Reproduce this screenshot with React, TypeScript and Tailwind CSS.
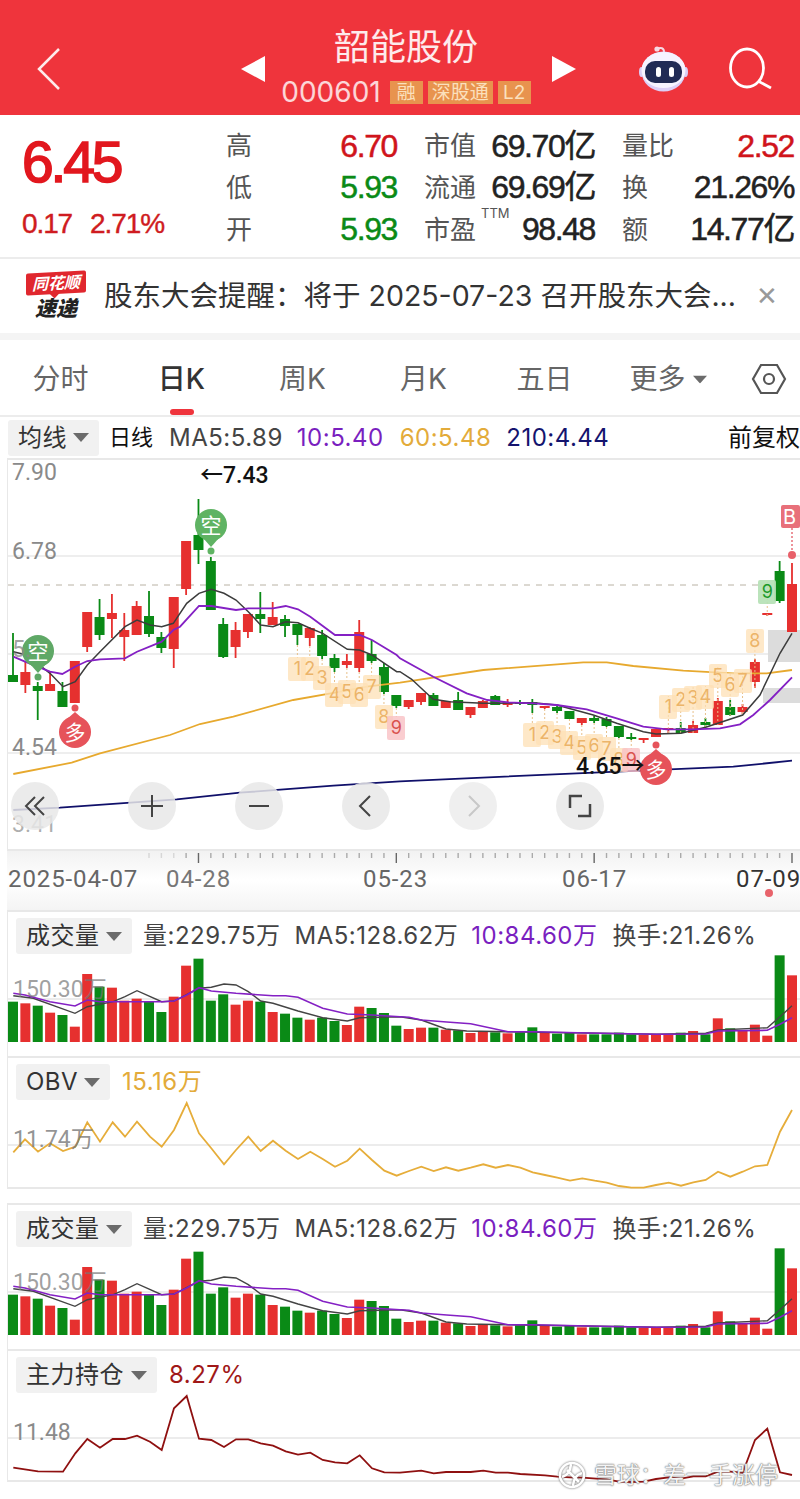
import type { ReactNode } from "react";

const RED = "#e6302f";
const GREEN = "#0a8a16";
const STEP = 12.365;
const cx = (i: number) => 13 + STEP * i;
const axisFont = "font-['Roboto','Noto_Sans_CJK_SC',sans-serif]";

// [index, body top, body bottom, wick top, wick bottom] in page pixels
const up = "r";
const dn = "g";
const candles: [string, number, number, number, number][] = [
  [dn, 675, 682, 633, 682], [up, 672, 685, 662, 693], [dn, 686, 691, 682, 720], [up, 684, 691, 672, 691],
  [dn, 691, 707, 682, 707], [up, 661, 703, 661, 703], [up, 612, 647, 612, 652], [dn, 617, 635, 599, 640],
  [up, 613, 619, 594, 638], [up, 630, 637, 613, 661], [up, 606, 635, 601, 635], [dn, 616, 634, 591, 637],
  [dn, 637, 648, 632, 653], [up, 597, 649, 597, 668], [up, 541, 589, 541, 595], [dn, 535, 550, 499, 564],
  [dn, 561, 610, 557, 610], [dn, 624, 657, 618, 658], [up, 630, 647, 622, 658], [up, 614, 632, 614, 638],
  [dn, 614, 619, 592, 633], [up, 617, 625, 602, 625], [dn, 619, 626, 615, 637], [dn, 624, 635, 624, 645],
  [up, 628, 638, 627, 646], [dn, 635, 656, 630, 659], [dn, 658, 668, 654, 672], [up, 661, 665, 654, 668],
  [up, 632, 668, 620, 672], [dn, 654, 661, 640, 663], [dn, 667, 692, 663, 694], [dn, 695, 706, 695, 708],
  [up, 700, 707, 700, 709], [up, 693, 702, 693, 705], [dn, 695, 706, 693, 706], [up, 701, 708, 701, 708],
  [dn, 700, 710, 692, 710], [up, 707, 715, 707, 718], [up, 701, 708, 700, 708], [dn, 696, 705, 695, 705],
  [up, 702, 705, 699, 707], [dn, 702, 704, 700, 705], [dn, 702, 705, 699, 713], [up, 706, 708, 706, 709],
  [dn, 707, 711, 706, 713], [dn, 711, 719, 711, 719], [up, 718, 723, 718, 725], [dn, 718, 721, 716, 723],
  [dn, 719, 726, 717, 727], [dn, 726, 737, 726, 738], [dn, 737, 739, 733, 740], [up, 738, 739, 738, 743],
  [up, 729, 737, 729, 737], [up, 728, 730, 728, 733], [dn, 728, 733, 722, 733], [up, 725, 733, 721, 733],
  [dn, 722, 725, 718, 727], [up, 701, 725, 698, 725], [dn, 707, 715, 700, 716], [up, 707, 712, 704, 714],
  [up, 662, 682, 659, 688], [up, 613, 615, 613, 616], [dn, 571, 601, 561, 603], [up, 584, 632, 563, 632],
];

// top of each volume bar, zoomed coords of the first panel
const volTops = [
  290, 295, 302, 323, 330, 365, 207, 245, 248, 287, 281, 290, 321, 275, 182, 161, 287, 268, 299, 287, 290, 321, 326,
  338, 344, 338, 348, 360, 305, 309, 324, 362, 372, 368, 368, 374, 376, 384, 380, 382, 385, 382, 367, 384, 386, 384,
  388, 388, 388, 383, 388, 390, 390, 390, 383, 378, 388, 340, 370, 378, 359, 392, 151, 211,
];

const toPath = (pts: number[][]) => pts.map(([x, y], i) => `${i ? "L" : "M"}${x.toFixed(1)} ${y.toFixed(1)}`).join(" ");
// zoom crops were 3x: left half starts at x=0, right half at x=400
const mix = (left: number[][], right: number[][], oy: number) => [
  ...left.map(([x, y]) => [x / 3, oy + y / 3]),
  ...right.map(([x, y]) => [400 + x / 3, oy + y / 3]),
];

const maPurple = toPath([
  ...[[40, 110], [75, 125], [150, 155], [187, 162], [225, 140], [262, 123], [300, 118], [375, 115], [411, 95], [485, 65], [520, 30]].map(([x, y]) => [x / 3, 620 + y / 3]),
  ...[[540, 860], [597, 798], [634, 798], [708, 810], [745, 805], [819, 805], [857, 798], [894, 808], [931, 830]].map(([x, y]) => [x / 3, 340 + y / 3]),
  ...mix([[1005, 45], [1079, 45], [1116, 60], [1190, 105]], [[0, 115], [100, 170], [200, 220], [262, 240], [325, 247], [400, 250], [470, 255], [560, 268], [650, 295], [730, 320], [800, 328], [880, 328], [960, 325], [1020, 313], [1060, 285], [1110, 240], [1176, 172]], 620),
]);
const maBlack = toPath([
  ...[[40, 95], [80, 105], [150, 160], [189, 200], [226, 185], [262, 135], [300, 95]].map(([x, y]) => [x / 3, 620 + y / 3]),
  ...[[375, 860], [411, 840], [450, 855], [485, 860], [520, 850], [560, 790], [597, 760], [634, 748], [672, 760], [708, 780], [745, 815], [782, 855], [819, 860], [857, 845], [894, 848]].map(([x, y]) => [x / 3, 340 + y / 3]),
  ...mix([[930, 25], [968, 40], [1042, 88], [1079, 90], [1116, 105], [1190, 155]], [[0, 155], [35, 178], [75, 215], [100, 238], [150, 245], [250, 250], [287, 250], [400, 248], [470, 255], [580, 285], [650, 310], [730, 335], [768, 342], [843, 340], [917, 322], [1028, 285], [1080, 225], [1140, 100], [1176, 40]], 620),
]);
const maOrange = toPath(mix([[40, 462], [215, 428], [300, 400], [510, 345], [600, 312], [700, 290], [880, 240], [1005, 218], [1100, 200]], [[0, 188], [250, 150], [550, 127], [620, 127], [700, 138], [850, 152], [1000, 160], [1100, 160], [1176, 150]], 620));
const maNavy = toPath(mix([[40, 570], [180, 563], [530, 538], [720, 518], [1000, 497]], [[0, 484], [530, 460], [1000, 440], [1176, 422]], 620));

const volPurple = toPath(mix([[40, 265], [75, 270], [150, 290], [225, 303], [262, 285], [300, 290], [485, 290], [522, 288], [560, 270], [597, 248], [634, 258], [708, 265], [819, 272], [857, 272], [894, 277], [968, 310], [1042, 327], [1116, 330]], [[0, 335], [27, 337], [64, 345], [140, 351], [212, 356], [324, 380], [400, 380], [600, 385], [770, 388], [917, 387], [954, 378], [1102, 376], [1140, 358], [1176, 338]], 905));
const volBlack = toPath(mix([[40, 272], [100, 280], [225, 325], [262, 305], [340, 290], [375, 275], [411, 257], [485, 290], [522, 288], [597, 250], [634, 247], [672, 237], [708, 240], [745, 260], [782, 288], [819, 295], [894, 318], [968, 338], [1042, 348], [1079, 338]], [[0, 335], [64, 345], [138, 372], [200, 378], [324, 380], [600, 385], [770, 388], [917, 385], [954, 375], [1102, 368], [1140, 335], [1176, 302]], 905));
const obvLine = toPath(mix([[40, 742], [75, 703], [114, 740], [150, 715], [189, 738], [226, 725], [262, 652], [300, 710], [338, 652], [375, 695], [411, 650], [450, 695], [485, 725], [522, 675], [560, 594], [597, 685], [634, 730], [672, 778], [708, 735], [745, 695], [782, 738], [819, 707], [857, 737], [894, 762], [931, 740], [968, 762], [1005, 785], [1042, 767], [1079, 731], [1116, 765], [1153, 797], [1190, 812]], [[0, 808], [27, 798], [64, 785], [101, 798], [138, 787], [175, 797], [212, 788], [250, 778], [287, 788], [324, 780], [361, 788], [398, 802], [435, 810], [472, 818], [510, 827], [547, 820], [584, 827], [620, 833], [657, 843], [694, 848], [731, 848], [768, 840], [806, 833], [843, 842], [880, 832], [917, 825], [954, 800], [991, 815], [1028, 800], [1065, 784], [1102, 780], [1140, 680], [1176, 615]], 905));
const holdLine = toPath(mix([[40, 803], [114, 814], [189, 815], [226, 760], [262, 717], [300, 743], [338, 717], [375, 717], [411, 707], [450, 725], [485, 750], [522, 625], [560, 588], [597, 716], [634, 720], [672, 741], [708, 718], [745, 718], [782, 730], [819, 737], [857, 754], [894, 764], [931, 758], [968, 780], [1005, 787], [1042, 790], [1079, 766], [1116, 805], [1153, 817]], [[0, 818], [64, 812], [101, 820], [138, 816], [212, 816], [250, 812], [287, 818], [324, 818], [361, 822], [435, 826], [472, 830], [510, 832], [547, 833], [620, 838], [657, 845], [694, 846], [731, 845], [768, 837], [806, 832], [843, 836], [880, 829], [917, 829], [954, 815], [991, 815], [1028, 818], [1065, 720], [1102, 686], [1140, 817], [1176, 825]], 1200));

// TD sequence counters over the candles: [candle index, centre y, label, tone]
const tdMarks: [number, number, string, string][] = [
  [23, 669, "1", "o"], [24, 669, "2", "o"], [25, 678, "3", "o"], [26, 695, "4", "o"], [27, 692, "5", "o"], [28, 695, "6", "o"], [29, 687, "7", "o"], [30, 717, "8", "o"], [31, 728, "9", "p"],
  [42, 735, "1", "o"], [43, 733, "2", "o"], [44, 737, "3", "o"], [45, 743, "4", "o"], [46, 748, "5", "o"], [47, 746, "6", "o"], [48, 749, "7", "o"], [49, 760, "8", "o"], [50, 760, "9", "p"],
  [53, 707, "1", "o"], [54, 700, "2", "o"], [55, 698, "3", "o"], [56, 697, "4", "o"], [57, 676, "5", "o"], [58, 685, "6", "o"], [59, 681, "7", "o"], [60, 641, "8", "o"], [61, 592, "9", "g"],
];

function Arrow({ className = "" }: { className?: string }) {
  return (
    <svg width="16" height="9" viewBox="0 0 16 9" className={className}>
      <path d="M0 0H16L8 9Z" fill="#6b6b6b" />
    </svg>
  );
}

function Pill({ label, width }: { label: string; width: string }) {
  return (
    <div className={`flex h-[36px] items-center justify-between rounded-[3px] bg-[#f1f1f1] pl-[10px] pr-[10px] text-[24px] text-[#333] ${width}`}>
      <span>{label}</span>
      <Arrow />
    </div>
  );
}

function VolumeBars({ top }: { top: number }) {
  const shift = top - 910;
  return (
    <svg viewBox={`8 ${955 + shift} 792 90`} className="block h-[90px] w-full">
      <line x1="8" x2="800" y1={999 + shift} y2={999 + shift} stroke="#e6e6e6" strokeWidth="1.5" />
      {volTops.map((t, i) => {
        const y = 905 + t / 3 + shift;
        return (
          <rect
            key={i}
            x={cx(i) - 5}
            y={y}
            width="10"
            height={1042 + shift - y}
            fill={candles[i][0] === up ? RED : GREEN}
          />
        );
      })}
      <g transform={`translate(0 ${shift})`} fill="none">
        <path d={volBlack} stroke="#444" strokeWidth="1.4" />
        <path d={volPurple} stroke="#8420c4" strokeWidth="1.6" />
      </g>
    </svg>
  );
}

function VolumePanel({ top }: { top: number }) {
  return (
    <section className="relative ml-[7px] h-[146px] border-t-2 border-l border-[#e8e8e8] bg-white">
      <div className="flex h-[43px] items-center pl-[8px] pt-[5px] text-[24px] tracking-[0.5px] text-[#444]">
        <Pill label="成交量" width="w-[116px]" />
        <span className="ml-[11px]">量:229.75万</span>
        <span className="ml-[14px]">MA5:128.62万</span>
        <span className="ml-[13px] text-[#7a1fbf]">10:84.60万</span>
        <span className="ml-[15px]">换手:21.26%</span>
      </div>
      <VolumeBars top={top} />
      <span className={`absolute left-[5px] top-[61px] text-[23px] text-[#777]/70 ${axisFont}`}>150.30万</span>
    </section>
  );
}

function LinePanel({
  label,
  pillWidth,
  value,
  valueColor,
  axis,
  gridY,
  viewY,
  path,
  lineColor,
}: {
  label: string;
  pillWidth: string;
  value: string;
  valueColor: string;
  axis: ReactNode;
  gridY: number;
  viewY: number;
  path: string;
  lineColor: string;
}) {
  return (
    <section className="relative ml-[7px] h-[133px] border-t-2 border-b-2 border-l border-[#e8e8e8] bg-white">
      <div className="flex h-[43px] items-center pl-[8px] pt-[5px] text-[24px] tracking-[0.5px]">
        <Pill label={label} width={pillWidth} />
        <span className={`ml-[12px] ${valueColor}`}>{value}</span>
      </div>
      <svg viewBox={`8 ${viewY} 792 86`} className="block h-[86px] w-full overflow-visible">
        <line x1="8" x2="800" y1={gridY} y2={gridY} stroke="#e6e6e6" strokeWidth="1.5" />
        <path d={path} fill="none" stroke={lineColor} strokeWidth="1.8" />
      </svg>
      {axis}
    </section>
  );
}

function Quote({ label, value, tone }: { label: ReactNode; value: string; tone: string }) {
  return (
    <div className="flex items-center justify-between">
      <span className="text-[26px] text-[#555]">{label}</span>
      <span className={`font-['Liberation_Sans','Noto_Sans_CJK_SC',sans-serif] text-[32px] leading-none tracking-[-1.4px] [-webkit-text-stroke:0.5px_currentColor] ${tone}`}>{value}</span>
    </div>
  );
}

function RoundButton({ children, className = "" }: { children: ReactNode; className?: string }) {
  return (
    <div className={`flex h-[48px] w-[48px] items-center justify-center rounded-full bg-[#e8e8e8]/85 ${className}`}>
      <svg width="32" height="32" viewBox="0 0 32 32" fill="none" stroke="#444" strokeWidth="2">
        {children}
      </svg>
    </div>
  );
}

function Pin({ x, y, tone, label, up: pointUp }: { x: number; y: number; tone: string; label: string; up?: boolean }) {
  return (
    <g>
      <circle cx={x} cy={y} r="16" fill={tone} />
      <path d={pointUp ? `M${x - 8} ${y - 13} L${x} ${y - 20} L${x + 8} ${y - 13}Z` : `M${x - 8} ${y + 13} L${x} ${y + 22} L${x + 8} ${y + 13}Z`} fill={tone} />
      <text x={x} y={y + 8} textAnchor="middle" fontSize="21" fill="#fff">
        {label}
      </text>
      <circle cx={x} cy={pointUp ? y - 24 : y + 26} r="3.5" fill={tone} />
    </g>
  );
}

function MainChart() {
  return (
    <section className="relative ml-[7px] h-[393px] border-y-2 border-l border-[#e8e8e8] bg-white">
      <svg viewBox="8 460 792 389" className="block h-full w-full">
        <g stroke="#e8e8e8" strokeWidth="1.5">
          <line x1="8" x2="800" y1="556" y2="556" />
          <line x1="8" x2="800" y1="654" y2="654" />
          <line x1="8" x2="800" y1="753" y2="753" />
        </g>
        <line x1="8" x2="800" y1="585" y2="585" stroke="#b9b2a4" strokeWidth="1" strokeDasharray="6 6" />
        {/* grey blocks near the right edge */}
        <rect x="768" y="630" width="32" height="32" fill="#dcdcdc" />
        <rect x="763" y="688" width="37" height="15" fill="#dcdcdc" />
        {candles.map(([c, bt, bb, wt, wb], i) => (
          <g key={i} fill={c === up ? RED : GREEN}>
            <rect x={cx(i) - 0.9} y={wt} width="1.8" height={wb - wt} />
            <rect x={cx(i) - 5} y={bt} width="10" height={Math.max(bb - bt, 2)} />
          </g>
        ))}
        {tdMarks.map(([i, y], k) => (
          <line key={k} x1={cx(i)} x2={cx(i)} y1={candles[i][4]} y2={y - 11} stroke="#e8c08a" strokeWidth="1" strokeDasharray="2 2" />
        ))}
        <g fill="none">
          <path d={maOrange} stroke="#e7a92e" strokeWidth="1.8" />
          <path d={maNavy} stroke="#10106a" strokeWidth="1.8" />
          <path d={maBlack} stroke="#3c3c3c" strokeWidth="1.5" />
          <path d={maPurple} stroke="#8420c4" strokeWidth="1.8" />
        </g>
        <Pin x={211} y={525} tone="#5fb363" label="空" />
        <Pin x={38} y={651} tone="#5fa866" label="空" />
        <Pin x={75} y={732} tone="#e6535a" label="多" up />
        <Pin x={656} y={769} tone="#e6535a" label="多" up />
        <path d="M792 528V552" stroke="#e8707a" strokeWidth="1.5" strokeDasharray="2 2" />
        <circle cx="792" cy="555" r="4" fill="#e8606a" />
        <rect x="781" y="505" width="19" height="23" rx="2" fill="#e8707a" />
        <text x="783" y="524" fontSize="20" fill="#fff">
          B
        </text>
      </svg>

      {/* axis values and markers sit on top of the candles */}
      <span className={`absolute left-[4px] top-[-4px] text-[23px] text-[#8a8a8a] ${axisFont}`}>7.90</span>
      <span className={`absolute left-[4px] top-[75px] text-[23px] text-[#8a8a8a] ${axisFont}`}>6.78</span>
      <span className={`absolute left-[4px] top-[173px] text-[23px] text-[#8a8a8a]/80 ${axisFont}`}>5.</span>
      <span className={`absolute left-[4px] top-[271px] text-[23px] text-[#8a8a8a] ${axisFont}`}>4.54</span>
      <span className={`absolute left-[4px] top-[348px] text-[23px] text-[#8a8a8a]/70 ${axisFont}`}>3.41</span>
      <span className={`absolute left-[192px] top-[-1px] text-[23px] font-medium text-[#111] ${axisFont}`}>←7.43</span>
      {tdMarks.map(([i, y, label, tone], k) => (
        <span
          key={k}
          className={`absolute flex h-[24px] w-[18px] items-center justify-center rounded-[2px] text-[18px] leading-none ${
            tone === "o"
              ? "bg-[#fde0b6]/75 text-[#ecb469]"
              : tone === "p"
                ? "bg-[#f9c0c4]/80 text-[#d9534f]"
                : "bg-[#b4e0b4]/90 text-[#1c9a2a]"
          }`}
          style={{ left: cx(i) - 8 - 9, top: y - 460 - 12 }}
        >
          {label}
        </span>
      ))}
      <span className={`absolute left-[568px] top-[290px] text-[23px] font-medium text-[#111] ${axisFont}`}>4.65→</span>
      <div className="absolute left-[3px] top-[322px] flex gap-[59px]">
        <RoundButton className="mr-[10px]">
          <path d="M16 7 7 16l9 9M25 7l-9 9 9 9" />
        </RoundButton>
        <RoundButton>
          <path d="M16 5v22M5 16h22" />
        </RoundButton>
        <RoundButton>
          <path d="M6 16h20" />
        </RoundButton>
        <RoundButton>
          <path d="M20 6 10 16l10 10" />
        </RoundButton>
        <div className="flex h-[48px] w-[48px] items-center justify-center rounded-full bg-[#ececec]/85">
          <svg width="32" height="32" viewBox="0 0 32 32" fill="none" stroke="#c8c8c8" strokeWidth="2">
            <path d="M12 6l10 10-10 10" />
          </svg>
        </div>
        <RoundButton>
          <path d="M18 6H6v12M14 26h12V14" strokeWidth="2.5" />
        </RoundButton>
      </div>
    </section>
  );
}

function DateAxis() {
  const ticks = Array.from({ length: 64 }, (_, i) => i).filter((i) => i >= 11);
  return (
    <div className="relative ml-[7px] h-[59px] bg-linear-to-b from-[#f2f2f2] via-white to-[#f4f4f4]">
      <svg viewBox="7 850 793 14" className="block h-[14px] w-full">
        {ticks.map((i) => {
          const major = i === 15 || i === 31 || i === 47 || i === 63;
          return (
            <line
              key={i}
              x1={cx(i)}
              x2={cx(i)}
              y1="852"
              y2={major ? 862 : 857}
              stroke={major ? "#666" : "#aaa"}
              strokeOpacity={i < 14 ? 0.4 : 1}
              strokeWidth="1.4"
            />
          );
        })}
      </svg>
      <div className={`grid grid-cols-[158px_197px_199px_174px_1fr] whitespace-nowrap pl-px text-[24px] leading-[28px] tracking-[0.9px] text-[#666] ${axisFont}`}>
        <span>2025-04-07</span>
        <span className="text-[#777]">04-28</span>
        <span>05-23</span>
        <span>06-17</span>
        <span className="text-[#333]">07-09</span>
      </div>
      <span className="absolute left-[758px] top-[38px] h-[8px] w-[8px] rounded-full bg-[#e8636b]" />
    </div>
  );
}

export default function App() {
  const tabs = [
    { label: "分时" },
    { label: "日K", active: true },
    { label: "周K" },
    { label: "月K" },
    { label: "五日" },
  ];

  return (
    <div className="relative h-[1499px] w-[800px] overflow-hidden bg-white font-['Inter','Noto_Sans_CJK_SC',sans-serif]">
      {/* Header */}
      <header className="flex h-[115px] items-center justify-between bg-[#ef343c] pl-[37px] pr-[27px] pt-[22px]">
        <svg width="24" height="44" viewBox="0 0 24 44" fill="none" stroke="#fff" strokeWidth="2.5" className="opacity-90">
          <path d="M22 2 2 22l20 20" />
        </svg>
        <div className="ml-[180px] flex items-center gap-[16px]">
          <svg width="24" height="26" viewBox="0 0 24 26">
            <path d="M24 0V26L0 13Z" fill="#fff" />
          </svg>
          <div className="flex h-[93px] w-[255px] flex-col items-center pr-[5px] pt-[2px]">
            <div className="text-[36px] leading-[46px] text-white/90">韶能股份</div>
            <div className="mt-[7px] flex h-[30px] items-center gap-[5px] text-[19px] text-[#fbe0bd]">
              <span className="mr-[4px] text-[28px] text-white/80">000601</span>
              <span className="w-[33px] bg-[#e8934e] text-center leading-[23px]">融</span>
              <span className="w-[65px] bg-[#e8934e] text-center leading-[23px]">深股通</span>
              <span className="w-[33px] bg-[#e8934e] text-center leading-[23px]">L2</span>
            </div>
          </div>
          <svg width="24" height="26" viewBox="0 0 24 26">
            <path d="M0 0V26L24 13Z" fill="#fff" />
          </svg>
        </div>
        <div className="ml-auto flex items-center gap-[39px]">
          <svg width="52" height="48" viewBox="0 0 52 48">
            <path d="M19 4c4-2 7-1 7 3" fill="none" stroke="#f6d9e4" strokeWidth="2" />
            <circle cx="19" cy="4" r="2.6" fill="#f6d9e4" />
            <ellipse cx="3.5" cy="27" rx="2.5" ry="5" fill="#d9cdf5" />
            <ellipse cx="47.5" cy="27" rx="2.5" ry="5" fill="#d9cdf5" />
            <ellipse cx="25.5" cy="26.5" rx="22" ry="20" fill="#dccff7" />
            <ellipse cx="25.5" cy="25" rx="22" ry="18" fill="#f6f3ff" />
            <rect x="7" y="16" width="37" height="22" rx="10" fill="#212b55" />
            <rect x="18" y="22" width="5" height="10" rx="2.5" fill="#fff" />
            <rect x="31" y="22" width="5" height="10" rx="2.5" fill="#fff" />
          </svg>
          <svg width="44" height="44" viewBox="0 0 44 44" fill="none" stroke="#fff" strokeWidth="2.8">
            <ellipse cx="18" cy="21" rx="16.5" ry="19" />
            <path d="m29 34 13 7" />
          </svg>
        </div>
      </header>

      {/* Quote */}
      <section className="flex h-[144px] border-b-2 border-[#ececec] pb-[7px] pt-[10px]">
        <div className="w-[226px] pl-[22px] font-['Liberation_Sans',sans-serif]">
          <div className="mt-[6px] text-[57px] leading-[62px] tracking-[-3.2px] text-[#e2171e] [-webkit-text-stroke:1.6px_currentColor]">6.45</div>
          <div className="mt-[15px] flex gap-[18px] text-[28px] leading-[32px] tracking-[-1.1px] text-[#cf1b20] [-webkit-text-stroke:0.4px_currentColor]">
            <span>0.17</span>
            <span>2.71%</span>
          </div>
        </div>
        <div className="grid flex-1 grid-cols-[171px_171px_172px] grid-rows-3 gap-x-[27px] pr-[5px] leading-[41px]">
          <Quote label="高" value="6.70" tone="text-[#d0141b]" />
          <Quote label="市值" value="69.70亿" tone="text-[#222]" />
          <Quote label="量比" value="2.52" tone="text-[#d0141b]" />
          <Quote label="低" value="5.93" tone="text-[#0a8a16]" />
          <Quote label="流通" value="69.69亿" tone="text-[#222]" />
          <Quote label="换" value="21.26%" tone="text-[#222]" />
          <Quote label="开" value="5.93" tone="text-[#0a8a16]" />
          <Quote
            label={
              <>
                市盈
                <sup className="ml-[5px] align-[14px] text-[13px] leading-none">TTM</sup>
              </>
            }
            value="98.48"
            tone="text-[#222]"
          />
          <Quote label="额" value="14.77亿" tone="text-[#222]" />
        </div>
      </section>

      {/* Alert strip */}
      <section className="flex h-[81px] items-center border-b-[7px] border-[#f4f4f4] pl-[26px]">
        <div className="flex w-[60px] flex-col items-center">
          <div className="relative w-full -skew-y-3 rounded-[2px] bg-[#e0272e] text-center text-[16px] font-bold italic leading-[22px] text-white">
            同花顺
            <span className="absolute bottom-[-3px] left-[25px] h-[7px] w-[7px] rotate-45 bg-[#e0272e]" />
          </div>
          <div className="mt-[3px] text-[21px] font-black italic leading-[24px] text-[#222]">速递</div>
        </div>
        <span className="ml-[18px] w-[632px] whitespace-nowrap text-[28.5px] text-[#333]">股东大会提醒：将于 2025-07-23 召开股东大会...</span>
        <span className="ml-[20px] text-[26px] leading-none text-[#999]">✕</span>
      </section>

      {/* Tabs */}
      <nav className="grid h-[77px] grid-cols-[121px_121px_121px_121px_121px_121px_1fr] items-center border-b-2 border-[#ececec] pt-[3px] text-center text-[28px] text-[#666]">
        {tabs.map((t) => (
          <div key={t.label} className={`relative ${t.active ? "font-medium text-[#333]" : ""}`}>
            {t.label}
            {t.active && <span className="absolute bottom-[-15px] left-[49px] h-[6px] w-[24px] rounded-full bg-[#ef343c]" />}
          </div>
        ))}
        <div className="ml-[6px] flex items-center justify-center gap-[6px]">
          更多
          <Arrow className="scale-90" />
        </div>
        <svg width="36" height="32" viewBox="0 0 36 32" fill="none" stroke="#555" strokeWidth="2.2" className="ml-[25px]">
          <path d="M10 2h16l8 14-8 14H10L2 16Z" />
          <circle cx="18" cy="16" r="5" />
        </svg>
      </nav>

      {/* MA legend */}
      <div className="flex h-[41px] items-center pl-[8px] text-[24px] tracking-[0.5px] text-[#444]">
        <div className="flex h-[36px] w-[91px] items-center justify-between rounded-[3px] bg-[#f1f1f1] px-[10px] text-[#333]">
          <span>均线</span>
          <Arrow />
        </div>
        <span className="ml-[10px] text-[22px] tracking-normal text-[#111]">日线</span>
        <span className="ml-[16px]">MA5:5.89</span>
        <span className="ml-[14px] text-[#7a1fbf]">10:5.40</span>
        <span className="ml-[16px] text-[#e3ab3a]">60:5.48</span>
        <span className="ml-[15px] text-[#14146e]">210:4.44</span>
        <span className="ml-auto tracking-normal text-[#111]">前复权</span>
      </div>

      <MainChart />
      <DateAxis />

      <VolumePanel top={910} />
      <LinePanel
        label="OBV"
        pillWidth="w-[94px]"
        value="15.16万"
        valueColor="text-[#e3ab3a]"
        axis={<span className={`absolute left-[5px] top-[65px] text-[23px] text-[#777]/80 ${axisFont}`}>11.74万</span>}
        gridY={1145}
        viewY={1101}
        path={obvLine}
        lineColor="#e6ad3a"
      />
      <div className="h-[14px]" />
      <VolumePanel top={1203} />
      <LinePanel
        label="主力持仓"
        pillWidth="w-[141px]"
        value="8.27%"
        valueColor="text-[#a01818]"
        axis={<span className={`absolute left-[5px] top-[65px] text-[23px] text-[#8a8a8a] ${axisFont}`}>11.48</span>}
        gridY={1438}
        viewY={1394}
        path={holdLine}
        lineColor="#8f1010"
      />

      {/* Watermark */}
      <div className="absolute left-[558px] top-[1460px] flex items-center gap-[8px] whitespace-nowrap text-[23px] leading-[30px] text-[#f4f4f4] [text-shadow:0_0_2px_#777,0_0_1px_#555]">
        <svg width="28" height="28" viewBox="0 0 28 28" fill="none" stroke="#fff" strokeWidth="2.5" className="drop-shadow-[0_0_1px_#666]">
          <circle cx="14" cy="14" r="12" />
          <path d="M4 16c6-2 8-5 9-13M24 12c-6 2-8 5-9 13M9 9l12 12" />
        </svg>
        <span>雪球：差一手涨停</span>
      </div>
    </div>
  );
}
